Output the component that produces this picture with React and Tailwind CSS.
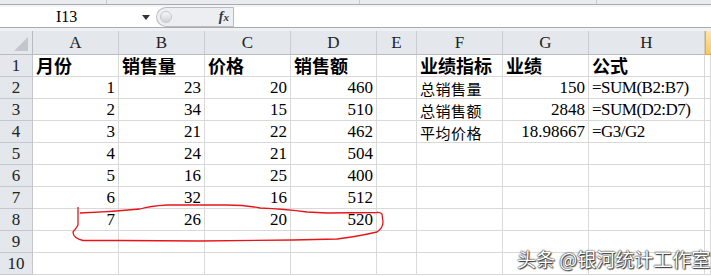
const COLS = ['A', 'B', 'C', 'D', 'E', 'F', 'G', 'H', 'I']
const WIDTHS = 'grid-cols-[33px_86px_86px_86px_86px_40px_86px_86px_116px_1fr]'

const ROWS = [
  ['月份', '销售量', '价格', '销售额', '', '业绩指标', '业绩', '公式', ''],
  [1, 23, 20, 460, '', '总销售量', 150, '=SUM(B2:B7)', ''],
  [2, 34, 15, 510, '', '总销售额', 2848, '=SUM(D2:D7)', ''],
  [3, 21, 22, 462, '', '平均价格', '18.98667', '=G3/G2', ''],
  [4, 24, 21, 504, '', '', '', '', ''],
  [5, 16, 25, 400, '', '', '', '', ''],
  [6, 32, 16, 512, '', '', '', '', ''],
  [7, 26, 20, 520, '', '', '', '', ''],
  ['', '', '', '', '', '', '', '', ''],
  ['', '', '', '', '', '', '', '', ''],
]

const serif = "font-['Liberation_Serif','Noto_Sans_CJK_SC',serif]"
const cjk = "font-['Noto_Sans_CJK_SC',sans-serif]"

function Cell({ value, bold }) {
  const str = String(value)
  const isNum = typeof value === 'number' || /^[\d.]+$/.test(str)
  const isCjk = /[\u4e00-\u9fff]/.test(str)
  const isFormula = str.startsWith('=')

  let font = `${serif} text-[17px]`
  if (isCjk) {
    font = bold
      ? `${cjk} text-[18px] font-bold pb-[2px]`
      : `${cjk} text-[15px] tracking-[0.5px] pt-[2px]`
  }

  return (
    <div
      className={`h-[22px] border-r border-b border-[#d9d9d9] flex items-center overflow-visible whitespace-nowrap leading-none text-black ${
        isNum ? 'justify-end pr-[3px]' : 'justify-start pl-[3px]'
      } ${font} ${isFormula ? 'tracking-[-0.5px] pl-[2px]' : ''}`}
    >
      {value}
    </div>
  )
}

export default function App() {
  return (
    <div className="relative w-[711px] h-[276px] overflow-hidden bg-white select-none">
      {/* ribbon bottom */}
      <div className="h-[4px] bg-[#e9ebee] flex">
        <div className="w-[107px] border-r border-[#c8cbd0]" />
        <div className="w-[253px] border-r border-[#c8cbd0]" />
        <div className="w-[237px] border-r border-[#c8cbd0]" />
      </div>
      <div className="h-[1px] bg-[#a7abb0]" />
      <div className="h-[2px] bg-[#f3f4f6]" />

      {/* formula bar */}
      <div className="h-[20px] flex bg-white">
        <div className="w-[156px] flex items-center relative">
          <span className={`ml-[56px] text-[16px] leading-none ${serif}`}>I13</span>
          <span className="absolute left-[142px] top-[8px] w-0 h-0 border-l-[4px] border-r-[4px] border-t-[5px] border-l-transparent border-r-transparent border-t-[#333]" />
        </div>
        <div className="w-[77px] flex items-center bg-[#eceef1] rounded-l-full border-l border-y border-[#b9bdc3]">
          <div className="w-[12px] h-[12px] ml-[3px] rounded-full bg-gradient-to-b from-[#f7f8fa] to-[#cfd3d8] border border-[#c4c8cd]" />
          <span className="ml-auto mr-[4px] italic font-bold text-[14px] leading-none text-[#333] font-['Liberation_Serif',serif]">
            f<span className="text-[11px]">x</span>
          </span>
        </div>
        <div className="w-[1px] bg-[#b9bdc3]" />
        <div className="flex-1 bg-white" />
      </div>
      <div className="h-[1px] bg-[#a7abb0]" />
      <div className="h-[3px] bg-[#eef0f2]" />

      {/* sheet */}
      <div className={`grid ${WIDTHS}`}>
        {/* corner with select-all triangle */}
        <div className="h-[24px] bg-[#e4e7eb] border-r border-b border-[#b7bcc3] flex items-end justify-end pr-[4px] pb-[3px]">
          <svg width="14" height="14" viewBox="0 0 14 14">
            <path d="M14 0 L14 14 L0 14 Z" fill="#c3c6ca" />
          </svg>
        </div>
        {COLS.map((c) => (
          <div
            key={c}
            className={`h-[24px] flex items-center justify-center border-b border-[#b7bcc3] text-[17px] leading-none text-[#222] ${serif} ${
              c === 'I'
                ? 'bg-gradient-to-b from-[#fde7a6] to-[#f7c860] border-l border-[#f2a33a]'
                : 'bg-[#e4e7eb] border-r border-r-[#c9ccd1]'
            }`}
          >
            {c !== 'I' && c}
          </div>
        ))}

        {ROWS.map((row, i) => (
          <div key={i} className="contents">
            <div
              className={`h-[22px] bg-[#e4e7eb] border-r border-b border-[#c4c8ce] flex items-center justify-center text-[17px] leading-none text-[#222] ${serif}`}
            >
              {i + 1}
            </div>
            {row.map((v, j) => (
              <Cell key={j} value={v} bold={i === 0} />
            ))}
          </div>
        ))}
      </div>

      {/* hand-drawn annotation */}
      <svg className="absolute inset-0 pointer-events-none" width="711" height="276" viewBox="0 0 711 276">
        <path
          d="M78 207 L78 225 Q76 229 73 232 Q73 238 83 240.5 L120 240.5 L200 241 L293 240 L337 239 Q355 237 377 232 Q383 228 383 222 L382 214 Q380 212 377 212.5 L327 213 L307 212 Q285 209 260 208 Q245 205 227 205 L167 205 Q150 206 140 209 Q110 212 80 213"
          fill="none"
          stroke="#e8141a"
          strokeWidth="1.3"
          strokeLinejoin="round"
        />
      </svg>

      {/* watermark */}
      <div
        className={`absolute left-[517px] top-[248px] text-[19px] leading-[22px] text-white whitespace-nowrap ${cjk} [text-shadow:0_0_2px_#222,0_0_1px_#222,1px_1px_1px_#444]`}
      >
        头条 @银河统计工作室
      </div>
    </div>
  )
}
